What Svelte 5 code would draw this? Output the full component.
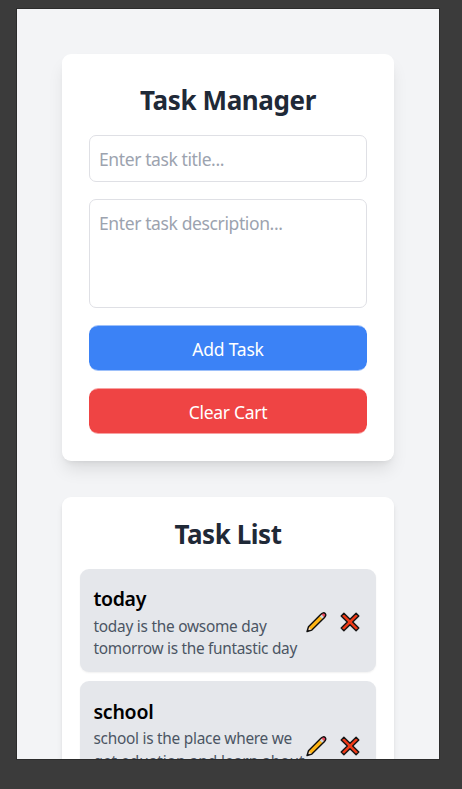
<script>
  const tasks = [
    { title: 'today', titleWidth: 52.5, height: 103.5, lines: [
      { text: 'today is the owsome day', w: 173 },
      { text: 'tomorrow is the funtastic day', w: 203.5 }
    ] },
    { title: 'school', titleWidth: 60, height: 126, lines: [
      { text: 'school is the place where we', w: 198.5 },
      { text: 'get eduation and learn about', w: 211 }
    ] }
  ];

  // Tracks each line so it fills the given width
  function fit(node, width) {
    const range = document.createRange();
    range.selectNodeContents(node);
    const natural = range.getBoundingClientRect().width;
    node.style.letterSpacing = `${(width - natural) / node.textContent.length}px`;
  }
</script>

<div class="backdrop">
  <main class="screen">
    <section class="card form">
      <h1><span use:fit={176}>Task Manager</span></h1>
      <div class="field"><span use:fit={125}>Enter task title...</span></div>
      <div class="field area"><span use:fit={183.5}>Enter task description...</span></div>
      <button class="add"><span use:fit={71.5}>Add Task</span></button>
      <button class="clear"><span use:fit={78.5}>Clear Cart</span></button>
    </section>

    <section class="card list">
      <h1><span use:fit={107}>Task List</span></h1>
      {#each tasks as task}
        <article style:height="{task.height}px">
          <div class="copy">
            <h2><span use:fit={task.titleWidth}>{task.title}</span></h2>
            {#each task.lines as line}
              <p><span use:fit={line.w}>{line.text}</span></p>
            {/each}
          </div>
          <div class="actions">
            <svg width="21" height="22" viewBox="0 0 22 22">
              <path d="M1 21 2.6 16 15.9 2.7C17.3 1.2 19 1 20.1 2.1S20.8 4.9 19.4 6.2L6.1 19.5Z" fill="#ffb514" />
              <path d="M1 21 2.6 16 6.1 19.5Z" fill="#f5d6b5" />
              <path d="m14 4.6 1.9-1.9 3.5 3.5-1.9 1.9Z" fill="#d2d7dc" />
              <path d="M15.9 2.7C17.3 1.2 19 1 20.1 2.1S20.8 4.9 19.4 6.2Z" fill="#ea4862" />
              <path d="M1.1 20.9 2.6 16 15.9 2.7C17.3 1.2 19 1 20.1 2.1S20.8 4.9 19.4 6.2L6.1 19.5Z" fill="none" stroke="#111" stroke-width="1.5" stroke-linejoin="round" />
              <path d="m1 21 .7-2.4 1.7 1.7Z" fill="#111" />
            </svg>
            <svg width="20" height="20" viewBox="0 0 20 20">
              <path d="M3.9 1.2 10 7.3l6.1-6.1 2.7 2.7L12.7 10l6.1 6.1-2.7 2.7-6.1-6.1-6.1 6.1-2.7-2.7L7.3 10 1.2 3.9Z" fill="#f03a17" stroke="#151515" stroke-width="1.4" stroke-linejoin="round" />
            </svg>
          </div>
        </article>
      {/each}
    </section>
  </main>
</div>

<style>
  .backdrop {
    box-sizing: border-box;
    height: 789px;
    padding: 9px 23px 30px 17px;
    background: #3b3b3b;
    font-family: "Noto Sans", "Open Sans", sans-serif;
    overflow: hidden;
  }
  .screen {
    box-sizing: border-box;
    height: 750px;
    padding: 45px;
    display: flex;
    flex-direction: column;
    gap: 36px;
    overflow: hidden;
    background: #f3f4f6;
    outline: 1px solid #2c2c2c;
  }
  .card {
    box-sizing: border-box;
    flex: none;
    display: flex;
    flex-direction: column;
    background: #fff;
    border-radius: 9px;
  }
  .form {
    height: 406.5px;
    padding: 27px;
    gap: 18px;
    box-shadow: 0 11.25px 17px -3.4px rgb(0 0 0 / 0.1), 0 4.5px 6.75px -4.5px rgb(0 0 0 / 0.1);
  }
  .list {
    padding: 18px;
    gap: 9px;
    box-shadow: 0 4.5px 6.75px -1px rgb(0 0 0 / 0.1), 0 2.25px 4.5px -2px rgb(0 0 0 / 0.1);
  }
  span {
    white-space: nowrap;
  }
  h1 {
    box-sizing: border-box;
    height: 36px;
    margin: 0;
    padding-top: 1px;
    font-size: 26px;
    line-height: 36px;
    font-weight: 700;
    color: #1f2937;
    text-align: center;
  }
  .list h1 {
    margin-bottom: 9px;
  }
  .field {
    box-sizing: border-box;
    flex: none;
    height: 47px;
    padding: 9px;
    border: 1px solid #dfe0e5;
    border-radius: 7px;
    color: #9ca3af;
    font-size: 17.5px;
    line-height: 28px;
  }
  .area {
    height: 109px;
    margin: -1px 0;
  }
  button {
    box-sizing: border-box;
    flex: none;
    height: 46px;
    padding: 2px 0 0;
    border: 0 solid;
    border-width: 1px 0;
    border-radius: 9px;
    background-clip: padding-box;
    color: #fff;
    font: 17.5px/27px "Noto Sans", "Open Sans", sans-serif;
  }
  .add {
    background-color: #3b82f6;
    border-color: rgb(59 130 246 / 0.5);
  }
  .clear {
    margin-top: -1px;
    background-color: #ef4444;
    border-color: rgb(239 68 68 / 0.5);
  }
  article {
    box-sizing: border-box;
    display: flex;
    align-items: center;
    justify-content: space-between;
    padding: 13.5px;
    background: #e5e7eb;
    border-radius: 9px;
    box-shadow: 0 1px 2px rgb(0 0 0 / 0.06);
  }
  .copy {
    flex: 0 0 208px;
    align-self: flex-start;
    padding-top: 1px;
  }
  h2 {
    margin: 0 0 1px;
    font-size: 19.5px;
    line-height: 31.5px;
    font-weight: 600;
    color: #000;
  }
  p {
    margin: 0;
    font-size: 15.4px;
    line-height: 22.5px;
    color: #4b5563;
  }
  .actions {
    flex: none;
    display: flex;
    align-items: center;
    gap: 13px;
    margin-right: 2.8px;
    padding-top: 3.2px;
  }
  .actions svg {
    flex: none;
  }
</style>
